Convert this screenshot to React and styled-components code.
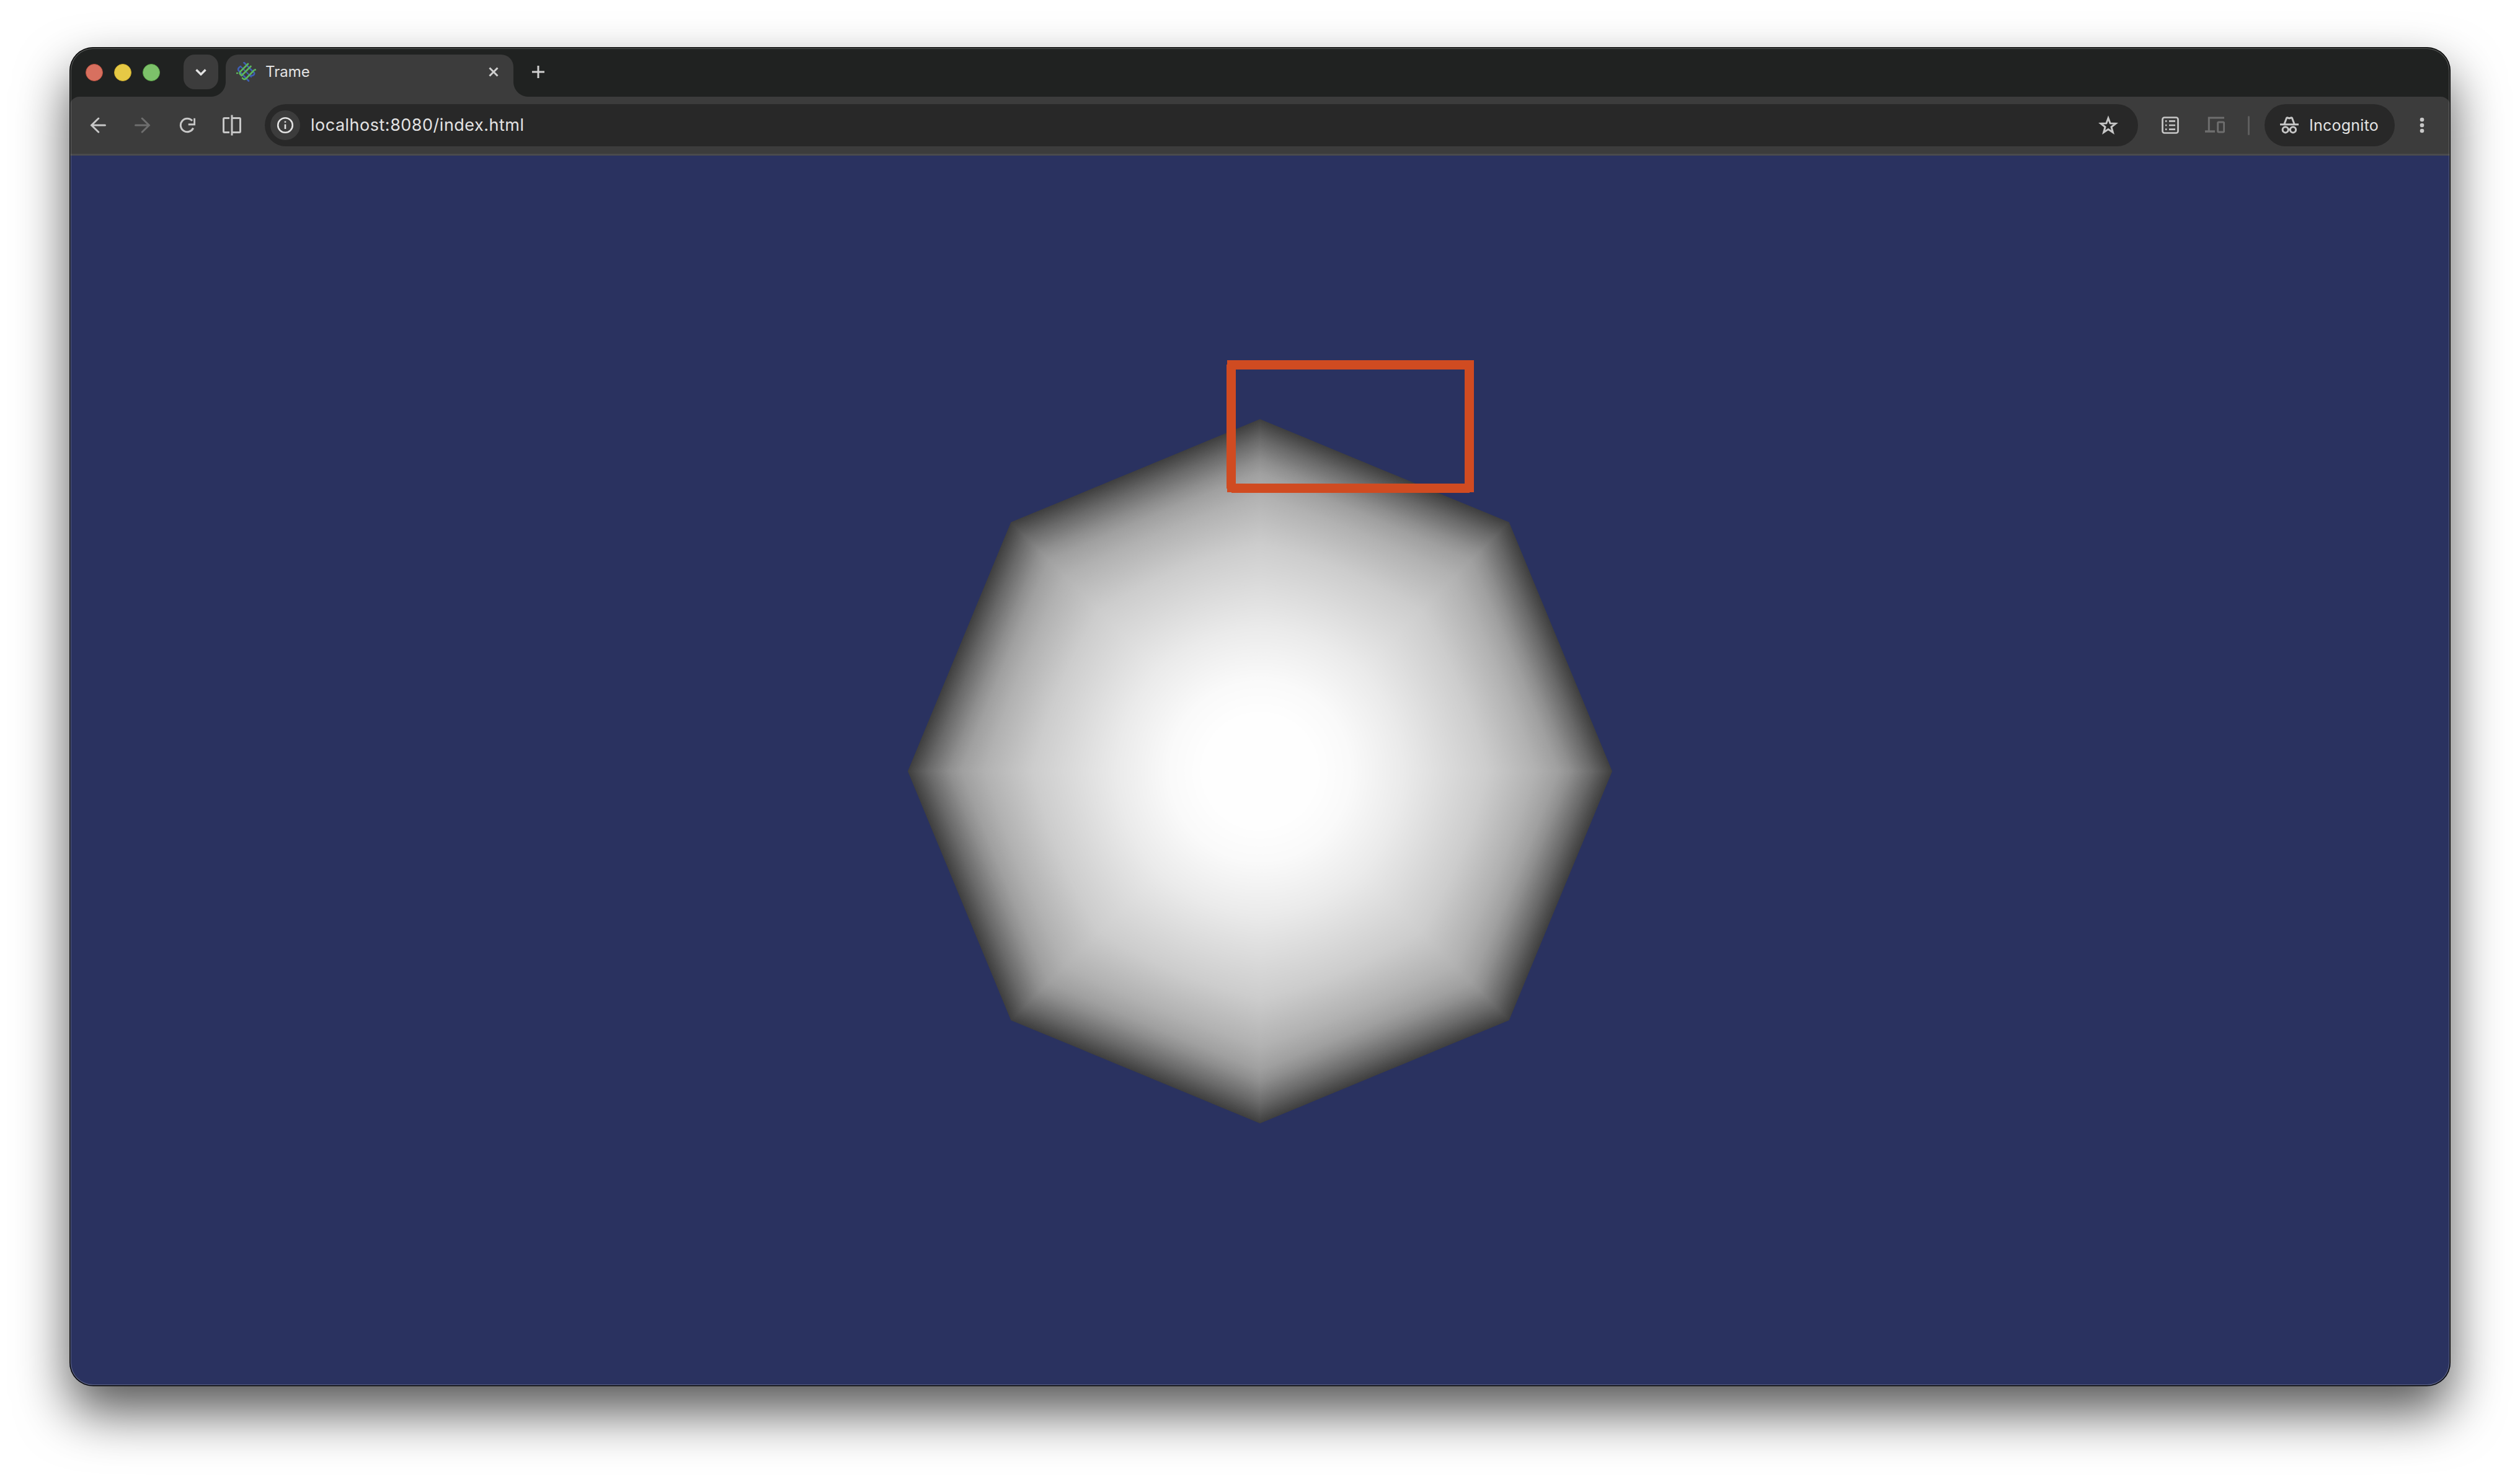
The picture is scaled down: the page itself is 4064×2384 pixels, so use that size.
import React from "react";
import styled, { createGlobalStyle } from "styled-components";

const Global = createGlobalStyle`
  html { margin: 0; padding: 0; background: #fff; overflow: hidden; }
  body { margin: 0; padding: 0; background: #fff; min-height: 2384px; font-family: Inter, "Noto Sans", "Liberation Sans", sans-serif; }
  #root { padding-top: 76px; }
`;

const Frame = styled.div`
  position: relative;
  display: flex;
  flex-direction: column;
  width: 3840px;
  height: 2160px;
  margin-left: 112px;
  border-radius: 38px;
  overflow: hidden;
  background: #202221;
  box-shadow: 0 42px 84px rgba(0, 0, 0, 0.66);
`;
const FrameEdge = styled.div`
  position: absolute;
  inset: 0;
  z-index: 5;
  border-radius: 38px;
  pointer-events: none;
  box-shadow: inset 0 0 0 1.5px #050505, inset 0 0 0 3px rgba(255, 255, 255, 0.2);
`;

const TabStrip = styled.div`
  position: relative;
  z-index: 2;
  display: flex;
  align-items: center;
  height: 80px;
  box-sizing: border-box;
  padding: 12px 0 0 26px;
  flex: none;
`;
const Lights = styled.div`
  display: flex;
  gap: 18px;
  margin: 0 38px 10px 0;
`;
const Light = styled.span`
  width: 28px;
  height: 28px;
  border-radius: 50%;
  box-sizing: border-box;
  background: ${(p) => p.$fill};
  border: 1px solid ${(p) => p.$rim};
`;
const TabSearch = styled.div`
  display: flex;
  align-items: center;
  justify-content: center;
  width: 56px;
  height: 56px;
  margin: 0 12px 12px 0;
  border-radius: 18px;
  background: #3c3c3c;
`;
const Tab = styled.div`
  position: relative;
  display: flex;
  align-items: center;
  width: 464px;
  height: 68px;
  box-sizing: border-box;
  padding: 0 16px 12px 17px;
  border-radius: 20px 20px 0 0;
  background: #3c3c3c;

  &::before,
  &::after {
    content: "";
    position: absolute;
    bottom: 0;
    width: 24px;
    height: 24px;
  }
  &::before {
    left: -24px;
    background: radial-gradient(circle at 0 0, transparent 23.5px, #3c3c3c 24.5px);
  }
  &::after {
    right: -24px;
    background: radial-gradient(circle at 100% 0, transparent 23.5px, #3c3c3c 24.5px);
  }
`;
const TabTitle = styled.span`
  flex: 1;
  margin-left: 15px;
  font-size: 24px;
  line-height: 32px;
  color: #e3e3e3;
`;
const CloseSlot = styled.div`
  display: flex;
  align-items: center;
  justify-content: center;
  flex: none;
  width: 32px;
  height: 32px;
`;
const NewTab = styled.div`
  display: flex;
  align-items: center;
  justify-content: center;
  width: 48px;
  height: 48px;
  margin: 0 0 12px 16px;
`;

const Toolbar = styled.div`
  display: flex;
  align-items: center;
  flex: none;
  height: 95px;
  box-sizing: border-box;
  padding: 0 10px;
  border-radius: 16px 16px 0 0;
  background: #3c3c3c;
  border-bottom: 3px solid #4a4a4c;
`;
const ToolButton = styled.div`
  display: flex;
  align-items: center;
  justify-content: center;
  flex: none;
  width: 72px;
  height: 68px;
`;
const Omnibox = styled.div`
  display: flex;
  align-items: center;
  flex: 1;
  height: 68px;
  margin: 0 16px 0 17px;
  padding: 0 0 0 9px;
  border-radius: 34px;
  background: #282828;
`;
const InfoChip = styled.div`
  display: flex;
  align-items: center;
  justify-content: center;
  flex: none;
  width: 48px;
  height: 48px;
  border-radius: 50%;
  background: #3c3c3c;
`;
const UrlText = styled.span`
  flex: 1;
  margin-left: 17px;
  font-size: 27px;
  letter-spacing: 0.5px;
  line-height: 34px;
  color: #e3e3e3;
`;
const StarSlot = styled.div`
  display: flex;
  align-items: center;
  justify-content: center;
  flex: none;
  width: 64px;
  height: 68px;
  margin-right: 16px;
`;
const Divider = styled.span`
  flex: none;
  width: 3px;
  height: 31px;
  margin: 0 24px 0 17px;
  border-radius: 2px;
  background: #5e5e5e;
`;
const IncognitoPill = styled.div`
  display: flex;
  align-items: center;
  flex: none;
  width: 210px;
  height: 68px;
  box-sizing: border-box;
  padding-left: 25px;
  margin-right: 8px;
  border-radius: 34px;
  background: #282828;
`;
const IncognitoLabel = styled.span`
  margin-left: 17px;
  font-size: 25px;
  letter-spacing: 0.25px;
  line-height: 34px;
  color: #e3e3e3;
`;

const Viewport = styled.div`
  position: relative;
  flex: 1;
  display: flex;
  align-items: center;
  justify-content: center;
  background: #2a3260;
`;
const SphereCanvas = styled.svg`
  display: block;
  flex: none;
  width: 1136px;
  height: 1136px;
`;
const Annotation = styled.svg`
  position: absolute;
  left: 1866px;
  top: 330px;
  width: 399px;
  height: 214px;
`;

const Glyph = styled.svg`
  display: block;
  flex: none;
  fill: none;
  stroke: ${(p) => p.$tone || "#c7c7c7"};
  stroke-width: ${(p) => p.$weight ?? 3}px;
`;
const LogoMark = styled.svg`
  display: block;
  flex: none;
  width: 32px;
  height: 32px;
  fill: none;
  stroke-width: 2.6px;
  stroke-linecap: round;
`;

const RINGS = [
  [0, 255],
  [100, 254],
  [153, 250],
  [240, 235],
  [373, 205],
  [448, 178],
  [483, 160],
  [503, 143],
  [536, 106],
  [568, 64],
];

function radiusFor(value) {
  for (let i = 1; i < RINGS.length; i++) {
    const [r0, v0] = RINGS[i - 1];
    const [r1, v1] = RINGS[i];
    if (value >= v1) return r1 - ((value - v1) / (v0 - v1)) * (r1 - r0);
  }
  return 568;
}

const STEP = Math.PI / 4;

function levelCurve(r) {
  const squareness = Math.min(1, Math.max(0, (r - 200) / 298));
  const apothem = Math.cos(STEP / 2);
  const pts = [];
  for (let k = 0; k < 96; k++) {
    const t = (k / 96) * 2 * Math.PI;
    const local = (((t % STEP) + STEP) % STEP) / STEP;
    const off = (local - 0.5) * STEP;
    const oct = (r * apothem) / Math.cos(off);
    const circle = r * (1 - (1 - apothem) * 0.5);
    const rad = oct * squareness + circle * (1 - squareness);
    pts.push(`${(rad * Math.sin(t)).toFixed(2)},${(-rad * Math.cos(t)).toFixed(2)}`);
  }
  return pts.join(" ");
}

function Sphere() {
  const levels = [];
  for (let v = 64; v <= 255; v++) levels.push(v);
  return (
    <SphereCanvas viewBox="-568 -568 1136 1136">
      {levels.map((v) => (
        <polygon key={v} points={levelCurve(radiusFor(v))} fill={`rgb(${v},${v},${v})`} />
      ))}
    </SphereCanvas>
  );
}

const TrameLogo = () => (
  <LogoMark viewBox="0 0 32 32">
    <g stroke="#3f5fb5">
      <path d="M12.500 1 29 17.500Q30 20 27 21.500 25 22.500 23.500 22" />
      <path d="M7 7Q2 10 3.500 13.500L20 30.500" />
      <path d="M8 8 24 24" strokeWidth="2" />
    </g>
    <g stroke="#5cb85c">
      <path d="M19 3 6.500 15.500Q4.500 18 7 20.500" />
      <path d="M23.500 7 8.500 22" />
      <path d="M28.500 13.500 16 26.500Q13 29.500 10 26" />
      <path d="M1 18h1M30 12.500h1" />
    </g>
  </LogoMark>
);

export default function App() {
  return (
    <>
      <Global />
      <Frame>
        <TabStrip>
          <Lights>
            <Light $fill="#d8705f" $rim="#b9503f" />
            <Light $fill="#e6c945" $rim="#c9a92c" />
            <Light $fill="#7dc16a" $rim="#5aa347" />
          </Lights>
          <TabSearch>
            <Glyph width="18" height="11" viewBox="0 0 18 11" $tone="#e3e3e3" $weight={3.4}>
              <path d="M1.500 1.500 9 9l7.500-7.500" />
            </Glyph>
          </TabSearch>
          <Tab>
            <TrameLogo />
            <TabTitle>Trame</TabTitle>
            <CloseSlot>
              <Glyph width="16" height="16" viewBox="0 0 16 16" $tone="#d0d0d0">
                <path d="M1.500 1.500l13 13M14.500 1.500l-13 13" />
              </Glyph>
            </CloseSlot>
          </Tab>
          <NewTab>
            <Glyph width="20" height="20" viewBox="0 0 20 20" $tone="#d0d0d0">
              <path d="M10 0v20M0 10h20" />
            </Glyph>
          </NewTab>
        </TabStrip>

        <Toolbar>
          <ToolButton>
            <Glyph width="26" height="26" viewBox="0 0 26 26" strokeLinecap="round">
              <path d="M24.500 13H2.500M13.800 2 2.600 13l11.200 11" />
            </Glyph>
          </ToolButton>
          <ToolButton>
            <Glyph width="26" height="26" viewBox="0 0 26 26" $tone="#6e6e6e" strokeLinecap="round">
              <path d="M1.500 13h22M12.200 2l11.200 11-11.200 11" />
            </Glyph>
          </ToolButton>
          <ToolButton>
            <Glyph width="26" height="26" viewBox="0 0 26 26">
              <path d="M22.700 17.500A10.700 10.700 0 1 1 21 5.800" />
              <path d="M24.700 1.700V11.700H14.700" />
            </Glyph>
          </ToolButton>
          <ToolButton>
            <Glyph width="34" height="34" viewBox="0 0 34 34">
              <path d="M13 5.500H5A1.500 1.500 0 0 0 3.500 7V27A1.500 1.500 0 0 0 5 28.500H13" />
              <path d="M17 5.500H29A1.500 1.500 0 0 1 30.500 7V27A1.500 1.500 0 0 1 29 28.500H17" />
              <path d="M17 .5V33.500" />
            </Glyph>
          </ToolButton>
          <Omnibox>
            <InfoChip>
              <Glyph width="28" height="28" viewBox="0 0 28 28" $tone="#e3e3e3" $weight={2.6}>
                <circle cx="14" cy="14" r="11.800" />
                <path d="M14 12.500V20" />
                <path d="M14 7.600v2.200" />
              </Glyph>
            </InfoChip>
            <UrlText>localhost:8080/index.html</UrlText>
            <StarSlot>
              <Glyph width="32" height="32" viewBox="0 0 32 32">
                <path d="M16 4.500 19.100 12.900 28 13.300 21 18.900 23.400 27.500 16 22.600 8.600 27.500 11 18.900 4 13.300 12.900 12.900Z" />
              </Glyph>
            </StarSlot>
          </Omnibox>
          <ToolButton>
            <Glyph width="28" height="28" viewBox="0 0 28 28" $weight={2.7}>
              <rect x="1.500" y="1.500" width="25" height="25" rx="3" />
              <path d="M12 7.300H22M12 14H22M12 20.700H22" />
              <path d="M6 7.300h2.400M6 14h2.400M6 20.700h2.400" />
            </Glyph>
          </ToolButton>
          <ToolButton>
            <Glyph width="32" height="28" viewBox="0 0 32 28" $tone="#6e6e6e">
              <path d="M31 2H6.300V24" />
              <path d="M0 24H16" strokeWidth="3.400" />
              <rect x="20.700" y="9" width="10" height="16" rx="1.500" />
            </Glyph>
          </ToolButton>
          <Divider />
          <IncognitoPill>
            <Glyph width="30" height="30" viewBox="0 0 30 30">
              <path d="M0 13.700H30" />
              <path d="M7 13 10.500 3.500Q11 2.500 12.500 3L15 4 17.500 3Q19 2.500 19.500 3.500L23 13" />
              <circle cx="8.700" cy="22.300" r="4.600" />
              <circle cx="21" cy="22.300" r="4.600" />
              <path d="M13.300 21.700H16.400" />
            </Glyph>
            <IncognitoLabel>Incognito</IncognitoLabel>
          </IncognitoPill>
          <ToolButton>
            <Glyph width="8" height="26" viewBox="0 0 8 26" $weight={0}>
              <circle cx="4" cy="4" r="3.300" fill="#c7c7c7" />
              <circle cx="4" cy="13" r="3.300" fill="#c7c7c7" />
              <circle cx="4" cy="22" r="3.300" fill="#c7c7c7" />
            </Glyph>
          </ToolButton>
        </Toolbar>

        <Viewport>
          <Sphere />
          <Annotation viewBox="1978 581 399 214" shapeRendering="crispEdges">
            <path
              fill="#d04b21"
              fillRule="evenodd"
              d="M1979 581H2377V794H2370V795H1986V794H1979V788H1978V588H1979ZM1993 596V780H2362V596Z"
            />
          </Annotation>
        </Viewport>
        <FrameEdge />
      </Frame>
    </>
  );
}
